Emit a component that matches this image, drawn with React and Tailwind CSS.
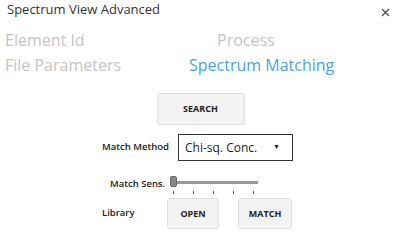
export default function App() {
  const ticks = [0, 1, 2, 3, 4]

  return (
    <div className="w-[400px] h-[248px] bg-white overflow-hidden relative" style={{ fontFamily: '"Open Sans", "Noto Sans", sans-serif' }}>
      {/* title bar */}
      <div className="flex items-start justify-between pl-[7px] pr-[10px] h-[28px]">
        <span className="text-[13px] text-[#333] leading-[18px]">Spectrum View Advanced</span>
        <svg width="9" height="9" viewBox="0 0 9 9" className="mt-[8px]">
          <path d="M1 1 L8 8 M8 1 L1 8" stroke="#555" strokeWidth="1.4" />
        </svg>
      </div>

      {/* section tabs */}
      <div className="pl-[5px] text-[16px] leading-[25px] text-[#c4c4c4]">
        <div className="flex">
          <span className="w-[212px]">Element Id</span>
          <span>Process</span>
        </div>
        <div className="flex">
          <span className="w-[184px]">File Parameters</span>
          <span className="text-[#4ba3dc]">Spectrum Matching</span>
        </div>
      </div>

      {/* search */}
      <div className="flex justify-center pl-[1px] mt-[15px]">
        <button className="w-[88px] h-[32px] bg-[#f3f3f3] border border-[#dedede] rounded-[3px] text-[9px] font-bold text-[#222]">
          SEARCH
        </button>
      </div>

      {/* form */}
      <div className="pl-[102px] mt-[9px] text-[9.5px] text-[#222] font-semibold">
        <div className="flex items-center h-[27px]">
          <span className="w-[76px]">Match Method</span>
          <div className="w-[115px] h-[27px] border-[1.5px] border-[#333] flex items-center justify-between pl-[6px] pr-[12px]">
            <span className="text-[12px] font-normal">Chi-sq. Conc.</span>
            <span className="text-[7px] text-[#222]">▼</span>
          </div>
        </div>

        <div className="flex items-start mt-[15px] h-[22px]">
          <span className="w-[68px] pl-[8px] pt-[1px]">Match Sens.</span>
          <div className="relative w-[90px] h-[20px]">
            <div className="absolute left-[4px] top-[5px] w-[84px] h-[3px] bg-[#999]" />
            <div className="absolute left-[0px] top-0 w-[7px] h-[11px] bg-[#888] border border-[#666] rounded-[2px]" />
            {ticks.map((t) => (
              <div key={t} className="absolute top-[15px] w-[1px] h-[3px] bg-[#555]" style={{ left: 3 + t * 20 }} />
            ))}
          </div>
        </div>

        <div className="flex items-center h-[31px]">
          <span className="w-[65px]">Library</span>
          <button className="w-[52px] h-[31px] bg-[#f3f3f3] border border-[#dedede] rounded-[3px] text-[9px] font-bold text-[#222]">
            OPEN
          </button>
          <button className="ml-[19px] w-[54px] h-[31px] bg-[#f3f3f3] border border-[#dedede] rounded-[3px] text-[9px] font-bold text-[#222]">
            MATCH
          </button>
        </div>
      </div>
    </div>
  )
}
